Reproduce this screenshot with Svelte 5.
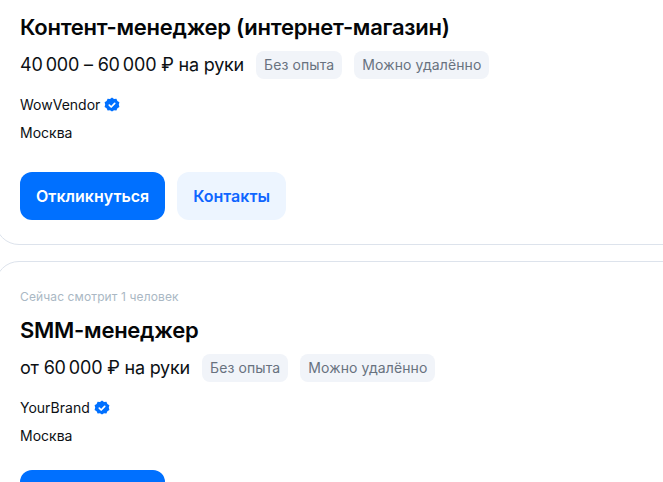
<script>
  const vacancies = [
    {
      title: "Контент-менеджер (интернет-магазин)",
      salary: "40\u2009000 – 60\u2009000 ₽ на руки",
      company: "WowVendor",
      contacts: true,
    },
    {
      viewing: "Сейчас смотрит 1 человек",
      title: "SMM-менеджер",
      salary: "от 60\u2009000 ₽ на руки",
      company: "YourBrand",
      contacts: false,
    },
  ];
</script>

<div class="page">
  <div class="list">
    {#each vacancies as v}
      <article class="card">
        {#if v.viewing}
          <div class="viewing">{v.viewing}</div>
        {/if}
        <h2 class="title">{v.title}</h2>
        <div class="salary-row">
          <span class="salary">{v.salary}</span>
          <span class="tag">Без опыта</span>
          <span class="tag">Можно удалённо</span>
        </div>
        <div class="company">
          {v.company}
          <svg width="16" height="16" viewBox="0 0 16 16" aria-hidden="true">
            <path
              fill="#0070ff"
              d="M8 .6l2 1.300 2.400-.1 1 2.200 2 1.300-.6 2.300.6 2.300-2 1.300-1 2.200-2.400-.1-2 1.300-2-1.300-2.400.1-1-2.200-2-1.300.6-2.300-.6-2.300 2-1.300 1-2.200 2.400.1z"
            />
            <path
              fill="none"
              stroke="#fff"
              stroke-width="1.700"
              stroke-linecap="round"
              stroke-linejoin="round"
              d="M5.300 8.200l1.900 1.800 3.500-3.600"
            />
          </svg>
        </div>
        <div class="city">Москва</div>
        <div class="actions" class:compact={!v.contacts}>
          <button class="btn primary">Откликнуться</button>
          {#if v.contacts}
            <button class="btn secondary">Контакты</button>
          {/if}
        </div>
      </article>
    {/each}
  </div>
</div>

<style>
  :global(body) {
    margin: 0;
    background: #fff;
  }
  .page {
    height: 482px;
    overflow: hidden;
    font-family: Inter, "Liberation Sans", sans-serif;
    color: #0c1014;
  }
  .list {
    display: flex;
    flex-direction: column;
    gap: 16px;
    margin: -13px -30px 0 -5px;
  }
  .card {
    border: 1px solid #dde3ec;
    border-radius: 24px;
    padding: 24px;
    display: flex;
    flex-direction: column;
  }
  .viewing {
    font-size: 12px;
    line-height: 16px;
    letter-spacing: 0.12px;
    color: #aab8c4;
    margin-top: 3px;
    margin-bottom: 10px;
  }
  .title {
    margin: 0;
    font-size: 22px;
    line-height: 30px;
    font-weight: 600;
    letter-spacing: -0.26px;
    color: #040608;
  }
  .salary-row {
    display: flex;
    align-items: center;
    gap: 12px;
    margin-top: 9px;
  }
  .salary {
    font-size: 18px;
    line-height: 28px;
    letter-spacing: -0.2px;
  }
  .tag {
    background: #f1f4f9;
    color: #68727f;
    font-size: 14px;
    line-height: 28px;
    letter-spacing: 0.1px;
    padding: 0 8px;
    border-radius: 8px;
  }
  .company {
    display: flex;
    align-items: center;
    gap: 4px;
    font-size: 14px;
    line-height: 20px;
    margin-top: 16px;
  }
  .city {
    font-size: 14px;
    line-height: 20px;
    margin-top: 8px;
  }
  .actions {
    display: flex;
    gap: 12px;
    margin-top: 29px;
  }
  .actions.compact {
    margin-top: 24px;
  }
  .btn {
    height: 48px;
    border: 0;
    border-radius: 12px;
    font-family: inherit;
    font-size: 16px;
    font-weight: 600;
    padding: 0 16px;
  }
  .primary {
    background: #0070ff;
    color: #fff;
  }
  .secondary {
    background: #edf5ff;
    color: #0f66ff;
  }
</style>
